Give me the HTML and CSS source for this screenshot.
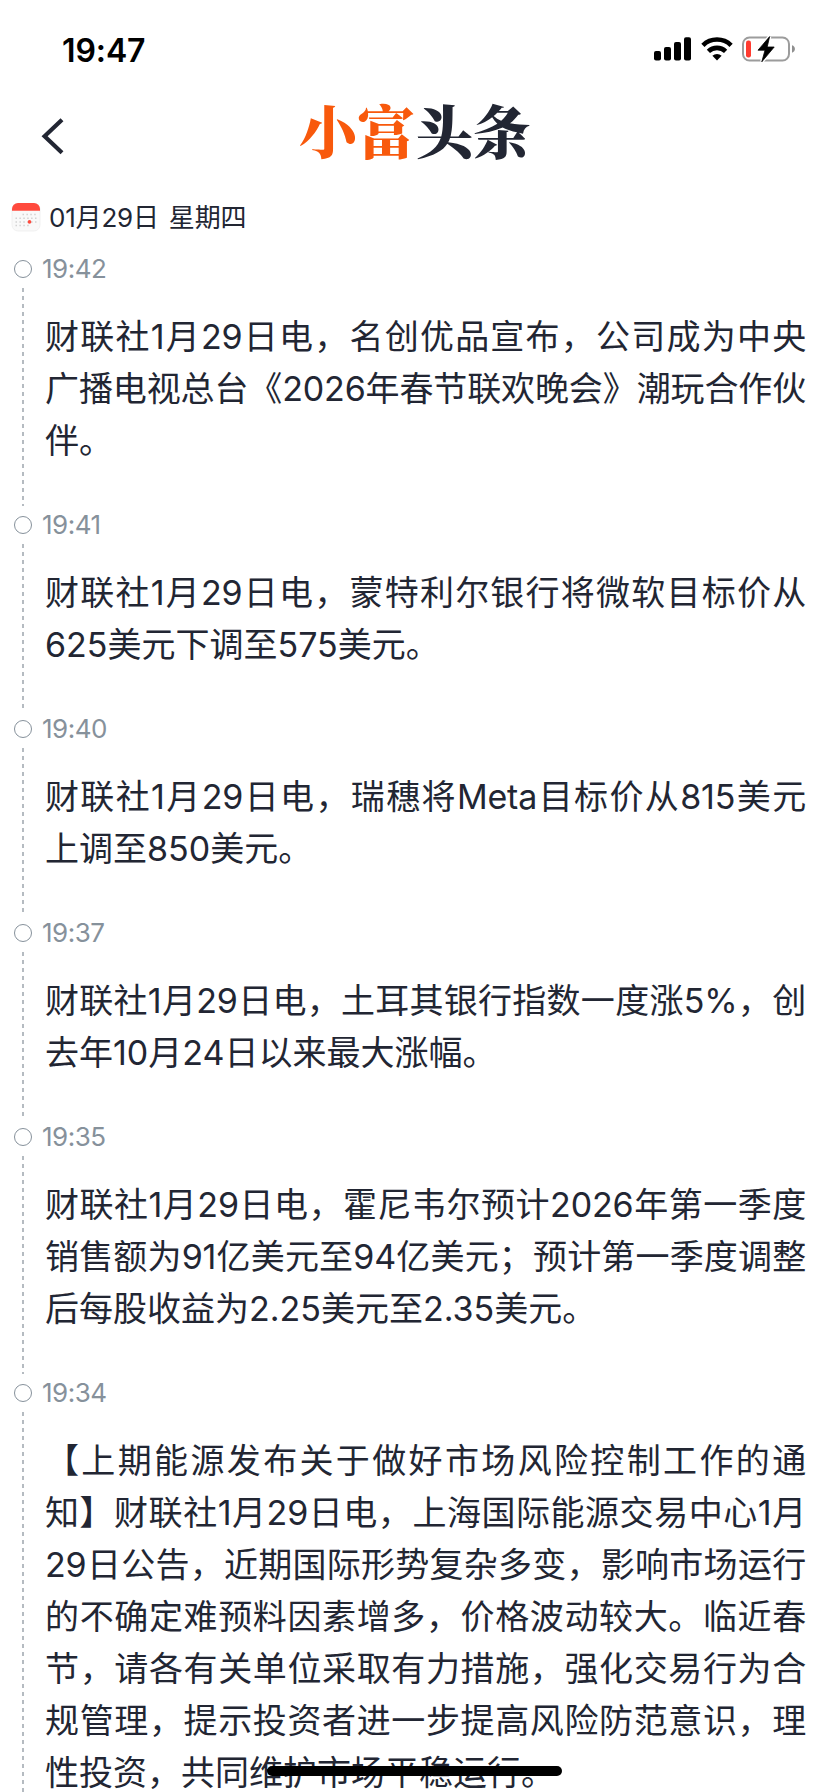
FILE: index.html
```html
<!DOCTYPE html>
<html lang="zh-CN">
<head>
    <meta charset="UTF-8">
    <meta name="viewport" content="width=device-width, initial-scale=1.0">
    <title>小富头条</title>
    <link rel="stylesheet" href="styles.css">
</head>
<body>
    <div class="page">
        <div class="status-bar">
            <div class="clock">19:47</div>
            <div class="status-icons">
                <svg class="signal" width="38" height="24" viewBox="0 0 38 24">
                    <rect x="0" y="14" width="7" height="9.5" rx="2"/>
                    <rect x="10" y="10" width="7" height="13.5" rx="2"/>
                    <rect x="20" y="5" width="7" height="18.5" rx="2"/>
                    <rect x="30" y="0.3" width="7" height="23.2" rx="2"/>
                </svg>
                <svg class="wifi" width="32" height="24" viewBox="0 0 32 24">
                    <path d="M1.9 8.3a20.2 20.2 0 0 1 28.2 0" fill="none" stroke="#000" stroke-width="4.6"/>
                    <path d="M7.4 14.3a12.4 12.4 0 0 1 17.2 0" fill="none" stroke="#000" stroke-width="4.6"/>
                    <path d="M16 23.5l-4.6-4.7a6.6 6.6 0 0 1 9.2 0z"/>
                </svg>
                <svg class="battery" width="54" height="28" viewBox="0 0 54 28">
                    <rect x="1" y="2.5" width="46" height="23" rx="6.5" fill="none" stroke="#9c9c9c" stroke-width="2"/>
                    <path d="M50 10.3c3.9 1.2 3.9 6.2 0 7.4z" fill="#8f8f8f"/>
                    <rect x="4" y="5.5" width="5" height="17" rx="2.2" fill="#ff3b30"/>
                    <path d="M27.6 1.6L16 15.2h7l-3.2 11.6L32.2 12h-7z" stroke="#fff" stroke-width="3.4"/>
                    <path d="M27.6 1.6L16 15.2h7l-3.2 11.6L32.2 12h-7z" stroke="#000" stroke-width="0.8" stroke-linejoin="round"/>
                </svg>
            </div>
        </div>

        <div class="nav-bar">
            <svg class="back" width="24" height="38" viewBox="0 0 24 38">
                <path d="M22 2.8L4.6 19.3L22 35.8" fill="none" stroke="#222633" stroke-width="4.2"/>
            </svg>
            <div class="logo"><span class="logo-accent">小富</span>头条</div>
        </div>

        <div class="date-row">
            <svg class="calendar" width="30" height="30" viewBox="0 0 30 30">
                <rect x="1" y="1.5" width="28" height="27.5" rx="6" fill="#f9f9f9" stroke="#eee" stroke-width="0.8"/>
                <path d="M1 8.8V7a6 6 0 0 1 6-6h16a6 6 0 0 1 6 6v1.8z" fill="#ff4a3d"/>
                <g fill="none" stroke="#d2d2d2" stroke-width="1.5" stroke-dasharray="1.5 2.4">
                    <path d="M11.5 12.5H27"/>
                    <path d="M4.5 16.2H27"/>
                    <path d="M4.5 19.9H27"/>
                    <path d="M4.5 23.6H20"/>
                </g>
                <circle cx="18.5" cy="19.9" r="1.8" fill="#ff4a3d"/>
            </svg>
            <span class="date-text">01月29日 星期四</span>
        </div>

        <div class="timeline">
            <div class="item">
                <div class="item-time"><i class="dot"></i><span class="time-text">19:42</span></div>
                <div class="item-body">
                    <p class="line">财联社1月29日电，名创优品宣布，公司成为中央</p>
                    <p class="line">广播电视总台《2026年春节联欢晚会》潮玩合作伙</p>
                    <p class="line line-end">伴。</p>
                </div>
            </div>
            <div class="item">
                <div class="item-time"><i class="dot"></i><span class="time-text">19:41</span></div>
                <div class="item-body">
                    <p class="line">财联社1月29日电，蒙特利尔银行将微软目标价从</p>
                    <p class="line line-end">625美元下调至575美元。</p>
                </div>
            </div>
            <div class="item">
                <div class="item-time"><i class="dot"></i><span class="time-text">19:40</span></div>
                <div class="item-body">
                    <p class="line">财联社1月29日电，瑞穗将Meta目标价从815美元</p>
                    <p class="line line-end">上调至850美元。</p>
                </div>
            </div>
            <div class="item">
                <div class="item-time"><i class="dot"></i><span class="time-text">19:37</span></div>
                <div class="item-body">
                    <p class="line">财联社1月29日电，土耳其银行指数一度涨5%，创</p>
                    <p class="line line-end">去年10月24日以来最大涨幅。</p>
                </div>
            </div>
            <div class="item">
                <div class="item-time"><i class="dot"></i><span class="time-text">19:35</span></div>
                <div class="item-body">
                    <p class="line">财联社1月29日电，霍尼韦尔预计2026年第一季度</p>
                    <p class="line">销售额为91亿美元至94亿美元；预计第一季度调整</p>
                    <p class="line line-end">后每股收益为2.25美元至2.35美元。</p>
                </div>
            </div>
            <div class="item">
                <div class="item-time"><i class="dot"></i><span class="time-text">19:34</span></div>
                <div class="item-body">
                    <p class="line">【上期能源发布关于做好市场风险控制工作的通</p>
                    <p class="line">知】财联社1月29日电，上海国际能源交易中心1月</p>
                    <p class="line">29日公告，近期国际形势复杂多变，影响市场运行</p>
                    <p class="line">的不确定难预料因素增多，价格波动较大。临近春</p>
                    <p class="line">节，请各有关单位采取有力措施，强化交易行为合</p>
                    <p class="line">规管理，提示投资者进一步提高风险防范意识，理</p>
                    <p class="line line-end">性投资，共同维护市场平稳运行。</p>
                </div>
            </div>
        </div>

        <div class="home-indicator"></div>
    </div>
</body>
</html>
```
FILE: styles.css
```css
* {
    box-sizing: border-box;
}
body {
    margin: 0;
    background: #fff;
    color: #222633;
    font-family: Inter, "Noto Sans CJK SC", sans-serif;
    font-weight: 370;
    text-spacing-trim: space-all;
}
.page {
    position: relative;
    height: 1792px;
    overflow: hidden;
}

/* 状态栏 */
.status-bar {
    display: flex;
    justify-content: space-between;
    align-items: center;
    height: 98px;
    padding: 0 32px 0 62px;
}
.clock {
    padding-top: 2px;
    color: #000;
    font-size: 32px;
    font-weight: 600;
    letter-spacing: -0.1px;
}
.status-icons {
    display: flex;
    align-items: center;
}
.wifi {
    margin-left: 9px;
}
.battery {
    margin-left: 9px;
}

/* 标题栏 */
.nav-bar {
    display: flex;
    align-items: center;
    height: 76px;
    padding-left: 40px;
}
.logo {
    margin-left: 235px;
    padding-bottom: 14px;
    font-family: "Noto Serif CJK SC", "Noto Sans CJK SC", serif;
    font-size: 58px;
    font-weight: 900;
    line-height: 76px;
    white-space: nowrap;
}
.logo-accent {
    color: #f8590c;
}

/* 日期 */
.date-row {
    display: flex;
    align-items: center;
    height: 76px;
    padding: 10px 0 0 11px;
    font-size: 26px;
}
.calendar {
    margin-right: 8px;
}
.date-text {
    padding-bottom: 4px;
    letter-spacing: -0.2px;
    word-spacing: 3px;
}

/* 时间线 */
.item-time {
    display: flex;
    align-items: center;
    height: 38px;
    padding-left: 14px;
    color: #86919b;
    font-size: 26px;
}
.time-text {
    padding-bottom: 2px;
    letter-spacing: -0.5px;
}
.dot {
    width: 18px;
    height: 18px;
    margin-right: 10px;
    border: 1px solid #86919b;
    border-radius: 50%;
}
.item-body {
    margin-left: 22px;
    padding: 23px 22px 39px 23px;
    background: repeating-linear-gradient(to bottom, #b5bbc1 0 4px, transparent 4px 8px) left top / 2px 100% no-repeat;
}
.line {
    margin: 0;
    font-size: 34px;
    line-height: 52px;
    letter-spacing: -0.15px;
    white-space: nowrap;
    text-align: justify;
    text-align-last: justify;
}
.line-end {
    letter-spacing: 0;
    text-align-last: left;
}

.home-indicator {
    position: absolute;
    left: 267px;
    top: 1766px;
    width: 295px;
    height: 10px;
    border-radius: 5px;
    background: #000;
}
```
